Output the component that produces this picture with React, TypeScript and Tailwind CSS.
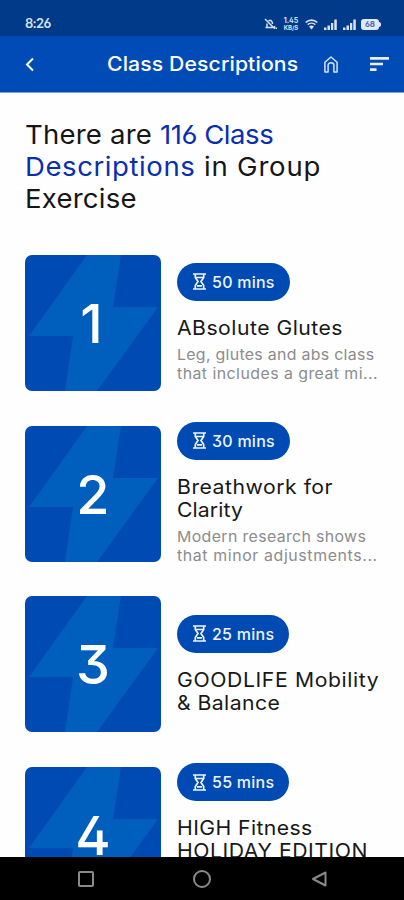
const classes = [
  {
    id: 1,
    mins: 50,
    offset: "",
    title: [{ text: "ABsolute Glutes", tracking: "tracking-[0.45px]" }],
    description: [
      { text: "Leg, glutes and abs class", tracking: "tracking-[0.28px]" },
      { text: "that includes a great mi...", tracking: "tracking-[0.42px]" },
    ],
  },
  {
    id: 2,
    mins: 30,
    offset: "",
    title: [
      { text: "Breathwork for", tracking: "tracking-[0.48px]" },
      { text: "Clarity", tracking: "tracking-[0.1px]" },
    ],
    description: [
      { text: "Modern research shows", tracking: "tracking-[0.33px]" },
      { text: "that minor adjustments...", tracking: "tracking-[0.57px]" },
    ],
  },
  {
    id: 3,
    mins: 25,
    offset: "pt-px",
    title: [
      { text: "GOODLIFE Mobility", tracking: "tracking-[0.57px]" },
      { text: "& Balance", tracking: "tracking-[0.4px]" },
    ],
    description: [],
  },
  {
    id: 4,
    mins: 55,
    offset: "self-start -mt-1",
    title: [
      { text: "HIGH Fitness", tracking: "tracking-[0.38px]" },
      { text: "HOLIDAY EDITION", tracking: "tracking-[0.5px]" },
    ],
    description: [],
  },
];

function StatusBar() {
  return (
    <div className="h-9 shrink-0 bg-[#003a88] flex items-end justify-between pl-[25px] pr-[23px] pb-[5px] text-[#d6e2f5]">
      <span className="text-[13px] leading-4 font-semibold tracking-[-0.7px]">8:26</span>
      <div className="flex items-center gap-[6px] h-[14px]">
        <svg width="13" height="12" viewBox="0 0 13 12" fill="none" stroke="currentColor" strokeWidth="1.5">
          <path d="M1 1l9 9M1.500 9.500h7M3 9V5.500M4.500 2.800C7 1.500 8.500 3.500 8.500 6" />
          <path d="M10.500 8v3M12.300 9.500V11" />
        </svg>
        <div className="w-4 text-[7px] leading-[7px] font-bold text-center">
          <div>1.45</div>
          <div className="text-[6px] leading-[7px]">KB/S</div>
        </div>
        <svg width="13" height="11" viewBox="0 0 13 11" fill="none" stroke="currentColor" strokeWidth="1.6">
          <path d="M.7 3.500C4 .3 9 .3 12.300 3.500M2.700 5.700c2.200-2 5.400-2 7.600 0" />
          <path d="M4 7.500c1.500-1.300 3.500-1.300 5 0L6.500 10.500z" fill="currentColor" stroke="none" />
        </svg>
        <Signal />
        <Signal />
        <div className="flex items-center -ml-px">
          <div className="w-[18px] h-[11px] rounded-[3px] bg-[#dfe8f6] text-[#4b6da6] text-[8px] leading-[11px] font-bold text-center">
            68
          </div>
          <div className="w-[2px] h-[5px] rounded-r bg-[#dfe8f6]" />
        </div>
      </div>
    </div>
  );
}

function Signal() {
  return (
    <svg width="13" height="11" viewBox="0 0 13 11" fill="currentColor">
      <path d="M0 8.500h2.500V11H0zM3.500 6.500H6V11H3.500zM7 4h2.300v7H7zM10.300 .5h2.500V11h-2.500z" />
    </svg>
  );
}

function Header() {
  return (
    <header className="h-[57px] shrink-0 bg-[#004bb5] border-b border-[#7fa3d8] flex items-center pl-[25px] pr-[15px] text-white">
      <svg width="10" height="15" viewBox="0 0 10 15" fill="none" stroke="currentColor" strokeWidth="2">
        <path d="M8 1.500L2 7.500l6 6" />
      </svg>
      <h1 className="ml-[72px] w-[217px] origin-left scale-x-[1.06] whitespace-nowrap text-[20px] leading-6 font-medium tracking-[0.1px]">
        Class Descriptions
      </h1>
      <svg width="14" height="17" viewBox="0 0 14 17" fill="none" stroke="#d5e3f8" strokeWidth="1.5" strokeLinejoin="round">
        <path d="M.9 16V6.200L7 1l6.100 5.200V16H9.900V9.200C9.900 5.800 4.100 5.800 4.100 9.200V16z" />
      </svg>
      <svg className="ml-auto" width="19" height="14" viewBox="0 0 19 14" fill="#e8f0fc">
        <path d="M0 0h19v2.700H0zM0 5.700h13v2.600H0zM0 11.300h6.500V14H0z" />
      </svg>
    </header>
  );
}

function Tile({ value }: { value: number }) {
  return (
    <div className="relative w-[136px] h-[136px] shrink-0 rounded-[7px] overflow-hidden bg-[#004ab3] flex items-center justify-center">
      <svg className="absolute inset-0" width="136" height="136" viewBox="0 0 136 136">
        <path d="M62 0H96L88 52H133L72 136H40L48 81H4z" fill="#005fbd" />
      </svg>
      <span className={`relative text-white text-[54px] leading-none font-medium mt-[2px] ${value === 1 ? "mr-[3px]" : ""}`}>
        {value}
      </span>
    </div>
  );
}

function Duration({ mins }: { mins: number }) {
  return (
    <div className="h-[38px] w-fit rounded-full bg-[#004ab3] flex items-center pl-4 pr-[15px] text-[#eef4fd]">
      <svg className="mr-[6px]" width="13" height="17" viewBox="0 0 13 17" fill="none" stroke="currentColor" strokeWidth="1.700">
        <path d="M0 1h13M0 16h13M2.300 1v3.500L5 8.500 2.300 12.500V16M10.700 1v3.500L8 8.500l2.700 4V16M3 4.500h7M4 12.800h5" />
      </svg>
      <span className="text-[16px] leading-5 font-medium tracking-[0.25px]">{mins} mins</span>
    </div>
  );
}

export default function App() {
  return (
    <div className="w-full h-screen flex flex-col overflow-hidden bg-[#fefefe] font-['Inter','Liberation_Sans',sans-serif] [font-feature-settings:'cv02','cv03','cv04','cv09']">
      <StatusBar />
      <Header />
      <main className="flex-1 min-h-0 overflow-hidden pl-[25px] pr-5 pt-[26px]">
        <h2 className="origin-left scale-x-[1.06] text-[26px] leading-8 text-[#161616] whitespace-nowrap">
          <div>
            <span className="tracking-[0.17px]">There are </span>
            <span className="tracking-[-0.45px] text-[#0a2fae]">116 Class</span>
          </div>
          <div>
            <span className="tracking-[0.53px] text-[#0a2fae]">Descriptions</span>
            <span className="tracking-[0.75px]"> in Group</span>
          </div>
          <div className="tracking-[0.2px]">Exercise</div>
        </h2>
        <div className="mt-10 flex flex-col gap-[34.7px]">
          {classes.map((item) => (
            <div key={item.id} className="h-[136px] flex items-center gap-4">
              <Tile value={item.id} />
              <div className={`whitespace-nowrap ${item.offset}`}>
                <Duration mins={item.mins} />
                <h3 className="mt-4 origin-left scale-x-[1.06] text-[20px] leading-[23px] text-[#181818]">
                  {item.title.map((line) => (
                    <div key={line.text} className={line.tracking}>{line.text}</div>
                  ))}
                </h3>
                {item.description.length > 0 && (
                  <p className="mt-[5px] origin-left scale-x-[1.06] text-[15px] leading-[19.5px] text-[#8c8c8c]">
                    {item.description.map((line) => (
                      <span key={line.text} className={`block ${line.tracking}`}>{line.text}</span>
                    ))}
                  </p>
                )}
              </div>
            </div>
          ))}
        </div>
      </main>
      <nav className="h-[43px] shrink-0 bg-black flex items-center justify-around pl-7 pr-[27px] text-[#8a8a8a]">
        <svg width="18" height="18" viewBox="0 0 18 18" fill="none" stroke="currentColor" strokeWidth="2">
          <rect x="2" y="2" width="14" height="14" rx="1" />
        </svg>
        <svg width="20" height="20" viewBox="0 0 20 20" fill="none" stroke="currentColor" strokeWidth="2">
          <circle cx="10" cy="10" r="8" />
        </svg>
        <svg width="18" height="18" viewBox="0 0 18 18" fill="none" stroke="currentColor" strokeWidth="2" strokeLinejoin="round">
          <path d="M15.500 2.500v13L3 9z" />
        </svg>
      </nav>
    </div>
  );
}
